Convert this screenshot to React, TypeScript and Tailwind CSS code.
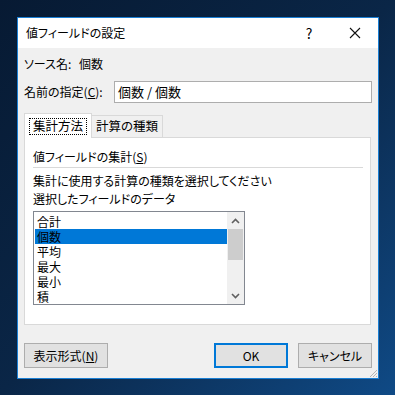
import React from "react";

const font = { fontFamily: '"Noto Sans CJK JP", "Noto Sans", sans-serif' };

const items = ["合計", "個数", "平均", "最大", "最小", "積"];

function Chevron({ up }: { up?: boolean }) {
  return (
    <svg width="9" height="6" viewBox="0 0 9 6">
      <path
        d={up ? "M1 5 L4.5 1.5 L8 5" : "M1 1 L4.5 4.5 L8 1"}
        fill="none"
        stroke="#606060"
        strokeWidth="1.6"
      />
    </svg>
  );
}

export default function App() {
  return (
    <div
      className="w-[395px] h-[395px] overflow-hidden pt-[17px] pl-[17px] bg-gradient-to-br from-[#071a33] via-[#0a2647] to-[#0f4a86] text-[12px] text-black [font-feature-settings:'palt']"
      style={font}
    >
      <div className="w-[362px] h-[362px] border border-[#1a7fd4] bg-[#f0f0f0] flex flex-col">
        {/* title bar */}
        <div className="h-[30px] bg-white flex items-center pl-[8px]">
          <span className="flex-1 leading-none">値フィールドの設定</span>
          <span className="w-[46px] text-center text-[14px] leading-none">?</span>
          <span className="w-[46px] flex justify-center">
            <svg width="12" height="12" viewBox="0 0 12 12">
              <path d="M1 1 L11 11 M11 1 L1 11" stroke="#111" strokeWidth="1.1" />
            </svg>
          </span>
        </div>

        <div className="flex-1 flex flex-col px-[6px]">
          <div className="mt-[8px] h-[16px] flex items-center">
            <span className="w-[55px]">ソース名:</span>
            <span>個数</span>
          </div>

          <div className="mt-[9px] flex items-center">
            <span className="w-[90px]">
              名前の指定(<span className="underline">C</span>):
            </span>
            <div className="flex-1 h-[22px] border border-[#adadad] bg-white flex items-center pl-[3px] text-[13px]">
              個数 / 個数
            </div>
          </div>

          {/* tabs */}
          <div className="mt-[10px] flex items-end h-[24px]">
            <div className="relative z-10 h-[25px] -mb-[1px] w-[68px] border border-b-0 border-[#d9d9d9] bg-white flex items-center justify-center">
              <span className="border border-dotted border-black px-[3px] h-[17px] flex items-center text-[12.5px]">
                集計方法
              </span>
            </div>
            <div className="h-[22px] w-[71px] border border-l-0 border-b-0 border-[#d9d9d9] bg-[#f0f0f0] flex items-center justify-center text-[12.5px]">
              計算の種類
            </div>
          </div>
          <div className="w-[347px] h-[188px] border border-[#d9d9d9] bg-white px-[8px] pt-[11px]">
            <div className="h-[16px] flex items-center">
              値フィールドの集計(<span className="underline">S</span>)
            </div>
            <div className="mt-[2px] mb-[5px] h-px w-[330px] bg-[#d9d9d9]" />
            <div className="h-[16px] flex items-center">集計に使用する計算の種類を選択してください</div>
            <div className="mt-[2px] h-[16px] flex items-center">選択したフィールドのデータ</div>
            <div className="mt-[4px] w-[212px] h-[94px] border border-[#828790] bg-white flex">
              <div className="flex-1 pl-[1px] pt-[2px]">
                {items.map((it, i) => (
                  <div
                    key={it}
                    className={`h-[15px] leading-[15px] pl-[2px] text-[12px] ${
                      i === 1 ? "bg-[#0078d7] text-black" : ""
                    }`}
                  >
                    {it}
                  </div>
                ))}
              </div>
              <div className="w-[17px] bg-[#f0f0f0] flex flex-col">
                <div className="h-[17px] flex items-center justify-center">
                  <Chevron up />
                </div>
                <div className="mx-[1px] h-[31px] bg-[#cdcdcd]" />
                <div className="flex-1" />
                <div className="h-[17px] flex items-center justify-center">
                  <Chevron />
                </div>
              </div>
            </div>
          </div>

          {/* buttons */}
          <div className="mt-[18px] flex items-center">
            <div className="w-[84px] h-[25px] border border-[#adadad] bg-[#e1e1e1] flex items-center justify-center">
              表示形式(<span className="underline">N</span>)
            </div>
            <div className="flex-1" />
            <div className="w-[74px] h-[25px] border-2 border-[#0078d7] bg-[#e1e1e1] flex items-center justify-center">
              OK
            </div>
            <div className="ml-[10px] w-[74px] h-[25px] border border-[#adadad] bg-[#e1e1e1] flex items-center justify-center">
              キャンセル
            </div>
          </div>
          <div className="flex-1 flex items-end justify-end -mr-[6px]">
            <svg width="10" height="10" viewBox="0 0 10 10">
              <path d="M9 2 L2 9 M9 5 L5 9 M9 8 L8 9" stroke="#b5b5b5" strokeWidth="1" />
            </svg>
          </div>
        </div>
      </div>
    </div>
  );
}
